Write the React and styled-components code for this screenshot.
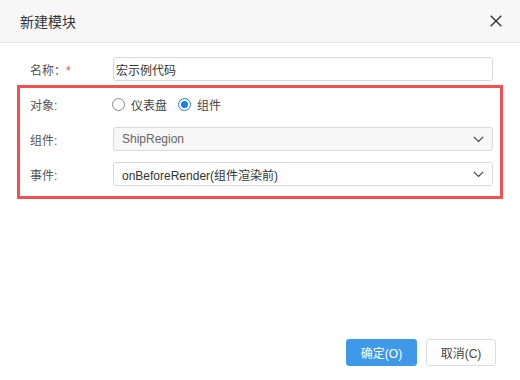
import React from 'react';
import styled, { createGlobalStyle } from 'styled-components';

const GlobalStyle = createGlobalStyle`
	html, body {
		margin: 0;
		padding: 0;
		background: #ffffff;
	}
	body {
		font-family: "Liberation Sans", "Noto Sans CJK SC", sans-serif;
		color: #333333;
	}
`;

const Dialog = styled.div`
	width: 520px;
	height: 380px;
	display: flex;
	flex-direction: column;
	background: #fff;
	box-sizing: border-box;
`;

const Header = styled.div`
	height: 42px;
	flex: none;
	display: flex;
	align-items: center;
	justify-content: space-between;
	padding: 0 18px 0 20px;
	background: #f7f7f7;
	border-bottom: 1px solid #e6e6e6;
`;

const Title = styled.div`
	font-size: 14px;
	color: #333;
`;

const CloseButton = styled.div`
	width: 12px;
	height: 12px;
	display: flex;
	cursor: pointer;
`;

const Body = styled.div`
	flex: 1;
	padding-top: 14px;
	display: flex;
	flex-direction: column;
	gap: 4px;
`;

const Row = styled.div`
	display: flex;
	align-items: center;
	height: 24px;
	padding-left: ${props => props.inset || 0}px;
	padding-right: ${props => props.right || 0}px;
`;

const Label = styled.div`
	width: 83px;
	flex: none;
	font-size: 12px;
	color: #555;
`;

const Star = styled.span`
	color: #e84c4c;
`;

const TextInput = styled.div`
	flex: 1;
	height: 24px;
	box-sizing: border-box;
	border: 1px solid #d9d9d9;
	border-radius: 3px;
	padding-left: 2px;
	display: flex;
	align-items: center;
	font-size: 12px;
	color: #333;
`;

const Highlight = styled.div`
	margin: 0 17px;
	border: 3px solid #f05252;
	padding: 4px 7px 10px 10px;
	display: flex;
	flex-direction: column;
	gap: 11px;
`;

const RadioGroup = styled.div`
	display: flex;
	align-items: center;
	gap: 11px;
	margin-left: -1px;
`;

const RadioItem = styled.label`
	display: flex;
	align-items: center;
	gap: 6px;
	font-size: 12px;
	color: #444;
`;

const RadioDot = styled.span`
	width: 13px;
	height: 13px;
	box-sizing: border-box;
	border-radius: 50%;
	border: 1px solid ${props => props.checked ? '#1a7fe8' : '#8a8a8a'};
	display: flex;
	align-items: center;
	justify-content: center;
	&::after {
		content: '';
		width: 7px;
		height: 7px;
		border-radius: 50%;
		background: ${props => props.checked ? '#1a7fe8' : 'transparent'};
	}
`;

const Select = styled.div`
	flex: 1;
	height: 24px;
	box-sizing: border-box;
	border: 1px solid #d9d9d9;
	border-radius: 3px;
	background: ${props => props.disabled ? '#f7f7f7' : '#fff'};
	color: ${props => props.disabled ? '#666' : '#333'};
	padding: 0 8px 0 8px;
	display: flex;
	align-items: center;
	justify-content: space-between;
	font-size: 12px;
`;

const Footer = styled.div`
	display: flex;
	justify-content: flex-end;
	gap: 9px;
	padding: 0 24px 14px 0;
`;

const Button = styled.div`
	width: ${props => props.width || 70}px;
	height: 27px;
	box-sizing: border-box;
	border-radius: 3px;
	display: flex;
	align-items: center;
	justify-content: center;
	font-size: 12px;
	background: ${props => props.primary ? '#3f98e8' : '#fff'};
	color: ${props => props.primary ? '#fff' : '#444'};
	border: 1px solid ${props => props.primary ? '#3f98e8' : '#dcdcdc'};
`;

const Chevron = () => (
	<svg width="11" height="7" viewBox="0 0 11 7" fill="none">
		<path d="M0.8 0.8 L5.5 5.5 L10.2 0.8" stroke="#444" strokeWidth="1.2" />
	</svg>
);

const CloseIcon = () => (
	<svg width="12" height="12" viewBox="0 0 12 12" fill="none">
		<path d="M0.7 0.7 L11.3 11.3 M11.3 0.7 L0.7 11.3" stroke="#333" strokeWidth="1.4" />
	</svg>
);

export default function App() {
	return (
		<>
			<GlobalStyle />
			<Dialog>
				<Header>
					<Title>新建模块</Title>
					<CloseButton><CloseIcon /></CloseButton>
				</Header>
				<Body>
					<Row inset={30} right={27}>
						<Label>名称：<Star>*</Star></Label>
						<TextInput>宏示例代码</TextInput>
					</Row>
					<Highlight>
						<Row>
							<Label>对象:</Label>
							<RadioGroup>
								<RadioItem><RadioDot />仪表盘</RadioItem>
								<RadioItem><RadioDot checked />组件</RadioItem>
							</RadioGroup>
						</Row>
						<Row>
							<Label>组件:</Label>
							<Select disabled>
								<span>ShipRegion</span>
								<Chevron />
							</Select>
						</Row>
						<Row>
							<Label>事件:</Label>
							<Select>
								<span>onBeforeRender(组件渲染前)</span>
								<Chevron />
							</Select>
						</Row>
					</Highlight>
				</Body>
				<Footer>
					<Button primary width={71}>确定(O)</Button>
					<Button>取消(C)</Button>
				</Footer>
			</Dialog>
		</>
	);
}
